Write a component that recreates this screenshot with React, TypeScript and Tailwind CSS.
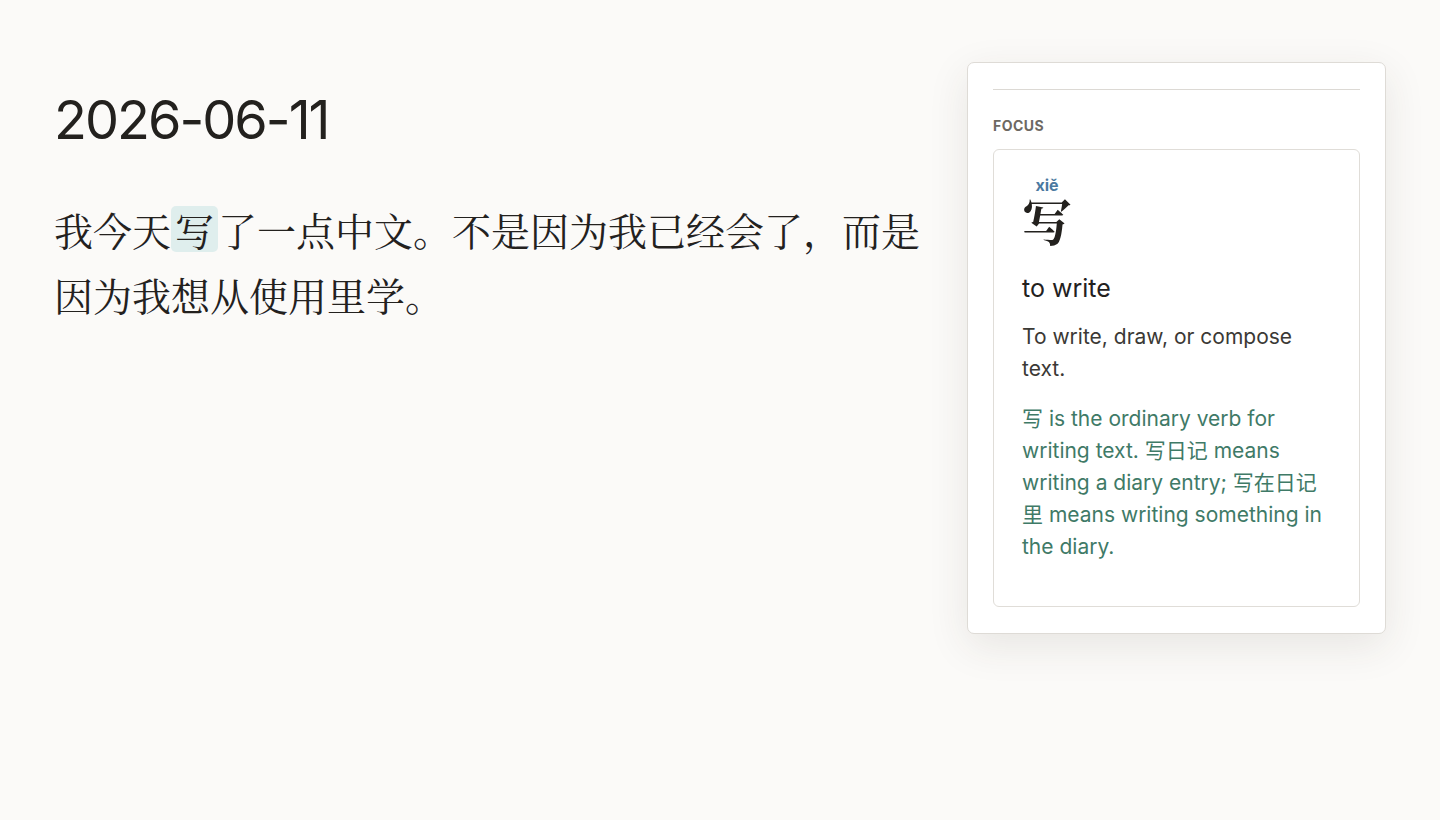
export default function App() {
  const sans = 'font-["Inter","Noto_Sans_CJK_SC",sans-serif]';
  const serif = 'font-["Noto_Serif_CJK_SC","Noto_Sans_CJK_SC",serif]';
  return (
    <div className={`min-h-screen bg-[#fbfaf8] ${sans}`}>
      <div className="flex gap-[44px] px-[54px] pt-[62px]">
        <main className="flex-1 min-w-0">
          <h1 className="mt-[26px] text-[54px] leading-[64px] tracking-[-2px] text-[#23211e] font-normal">
            2026-06-11
          </h1>
          <p className={`mt-[45px] text-[39px] leading-[65px] text-[#23211e] ${serif}`}>
            我今天
            <span className="inline-block h-[46px] rounded-[5px] bg-[#dfeeed] px-[4px] leading-[46px]">写</span>
            了一点中文。不是因为我已经会了，而是因为我想从使用里学。
          </p>
        </main>

        <aside className="w-[419px] shrink-0 rounded-[7px] border border-[#dedbd6] bg-white px-[25px] pt-[26px] pb-[26px] shadow-[0_12px_40px_rgba(60,50,40,0.10)]">
          <div className="border-t border-[#dcd9d4]" />
          <div className="mt-[26px] text-[14px] leading-[20px] font-bold uppercase tracking-[0.5px] text-[#6d6862]">
            Focus
          </div>
          <div className="mt-[13px] rounded-[6px] border border-[#e0ddd8] px-[28px] pt-[23px] pb-[43px]">
            <div className="inline-flex flex-col items-center">
              <span className="text-[16px] font-bold leading-[18px] text-[#4b79a1]">xiě</span>
              <span className={`text-[50px] leading-[50px] font-bold text-[#23211e] ${serif}`}>写</span>
            </div>
            <div className="mt-[28px] text-[25px] leading-[32px] text-[#23211e]">to write</div>
            <p className="mt-[17px] text-[21px] leading-[32px] text-[#3b3935]">
              To write, draw, or compose text.
            </p>
            <p className="mt-[18px] text-[21px] leading-[32px] text-[#3f7a67]">
              写 is the ordinary verb for writing text. 写日记 means writing a diary entry; 写在日记里 means
              writing something in the diary.
            </p>
          </div>
        </aside>
      </div>
    </div>
  );
}
